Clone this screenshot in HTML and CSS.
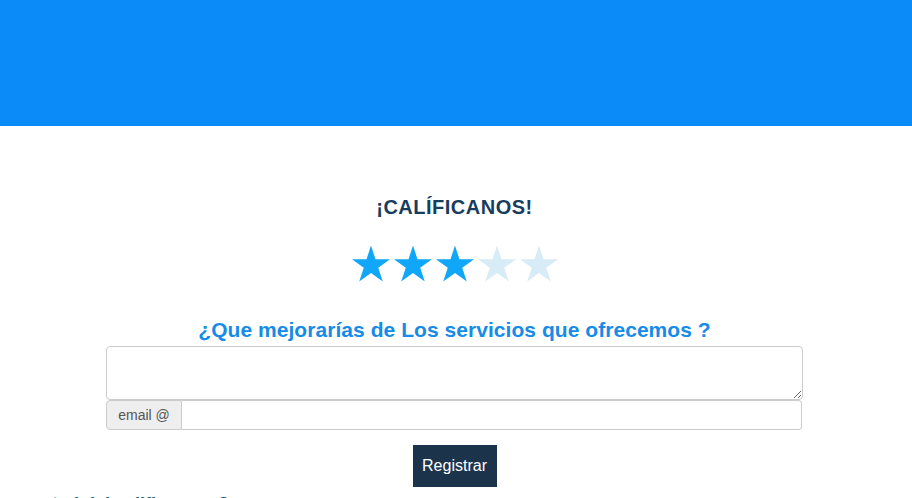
FILE: index.html
```html
<!DOCTYPE html>
<html lang="es">
<head>
<meta charset="utf-8">
<title>Califícanos</title>
<link rel="stylesheet" href="styles.css">
</head>
<body>
<header class="topbar"></header>
<main class="content">
  <h1 class="title">¡CALÍFICANOS!</h1>
  <div class="stars">
    <svg class="star on" viewBox="0 0 40 38"><polygon points="20,0 24.7,14.5 40,14.5 27.6,23.5 32.4,38 20,29 7.6,38 12.4,23.5 0,14.5 15.3,14.5"/></svg>
    <svg class="star on" viewBox="0 0 40 38"><polygon points="20,0 24.7,14.5 40,14.5 27.6,23.5 32.4,38 20,29 7.6,38 12.4,23.5 0,14.5 15.3,14.5"/></svg>
    <svg class="star on" viewBox="0 0 40 38"><polygon points="20,0 24.7,14.5 40,14.5 27.6,23.5 32.4,38 20,29 7.6,38 12.4,23.5 0,14.5 15.3,14.5"/></svg>
    <svg class="star off" viewBox="0 0 40 38"><polygon points="20,0 24.7,14.5 40,14.5 27.6,23.5 32.4,38 20,29 7.6,38 12.4,23.5 0,14.5 15.3,14.5"/></svg>
    <svg class="star off" viewBox="0 0 40 38"><polygon points="20,0 24.7,14.5 40,14.5 27.6,23.5 32.4,38 20,29 7.6,38 12.4,23.5 0,14.5 15.3,14.5"/></svg>
  </div>
  <h2 class="question">¿Que mejorarías de Los servicios que ofrecemos ?</h2>
  <textarea class="comments"></textarea>
  <div class="input-group">
    <span class="addon">email @</span>
    <input class="email" type="text">
  </div>
  <div class="actions">
    <button class="btn" type="button">Registrar</button>
  </div>
</main>
<p class="next">¿usted del calificamos ?</p>
</body>
</html>
```

FILE: styles.css
```css
html, body {
  margin: 0;
  padding: 0;
  background: #ffffff;
  font-family: "Liberation Sans", Arial, sans-serif;
}

.topbar {
  height: 126px;
  background: #0a8bf7;
}

.content {
  width: 697px;
  margin-left: 106px;
  display: flex;
  flex-direction: column;
  align-items: center;
}

.title {
  margin: 69px 0 0;
  font-family: "Liberation Sans", Arial, sans-serif;
  font-weight: 700;
  font-size: 20px;
  line-height: 24px;
  letter-spacing: 0.5px;
  color: #173d5e;
}

.stars {
  display: flex;
  gap: 4px;
  margin-top: 26px;
  height: 38px;
}

.star {
  width: 38px;
  height: 37px;
  display: block;
}

.star.on polygon { fill: #10a7f8; }
.star.off polygon { fill: #d7ecf6; }

.question {
  margin: 35px 0 0;
  font-size: 21px;
  line-height: 24px;
  font-weight: 700;
  letter-spacing: 0.05px;
  color: #168be8;
}

.comments {
  box-sizing: border-box;
  width: 697px;
  height: 54px;
  margin: 4px 0 0;
  border: 1px solid #cccccc;
  border-radius: 4px;
  resize: vertical;
  display: block;
}

.input-group {
  display: flex;
  width: 696px;
  height: 30px;
  align-self: flex-start;
}

.addon {
  box-sizing: border-box;
  width: 76px;
  display: flex;
  align-items: center;
  justify-content: center;
  background: #eeeeee;
  border: 1px solid #cccccc;
  border-radius: 4px 0 0 4px;
  color: #555555;
  font-size: 14px;
}

.email {
  flex: 1;
  box-sizing: border-box;
  border: 1px solid #cccccc;
  border-left: 0;
  border-radius: 0 4px 4px 0;
  margin: 0;
  height: 30px;
}

.actions {
  margin-top: 15px;
}

.btn {
  display: block;
  width: 84px;
  height: 42px;
  background: #1b344c;
  color: #ffffff;
  border: 0;
  border-radius: 0;
  font-family: "Liberation Sans", Arial, sans-serif;
  font-size: 16px;
  padding: 0;
}

.next {
  margin: 6px 0 0 20px;
  font-size: 18px;
  font-weight: 700;
  color: #1a5f80;
  line-height: 22px;
}
```
